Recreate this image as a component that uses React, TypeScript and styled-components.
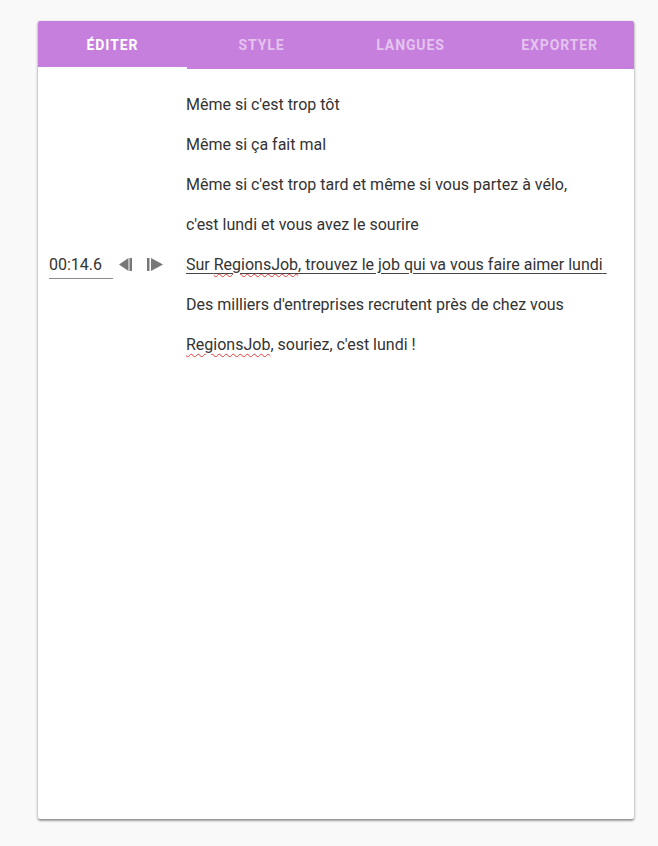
import React from 'react';
import styled, { createGlobalStyle } from 'styled-components';

const GlobalStyle = createGlobalStyle`
  html, body {
    margin: 0;
    padding: 0;
    background: #f9f9f9;
    font-family: Roboto, "Liberation Sans", sans-serif;
  }
`;

const Page = styled.div`
  padding: 21px 24px 27px 38px;
`;

const Card = styled.div`
  background: white;
  height: 798px;
  border-radius: 2px;
  box-shadow: 0 1px 3px rgba(0, 0, 0, 0.35), 0 2px 2px rgba(0, 0, 0, 0.22);
  display: flex;
  flex-direction: column;
  overflow: hidden;
`;

const TabBar = styled.div`
  display: grid;
  grid-template-columns: repeat(4, 1fr);
  height: 48px;
  background: #c77fdd;
`;

const Tab = styled.div<{ $active?: boolean }>`
  display: flex;
  align-items: center;
  justify-content: center;
  position: relative;
  font-size: 14px;
  font-weight: 700;
  letter-spacing: 0.9px;
  text-transform: uppercase;
  color: ${p => (p.$active ? '#ffffff' : 'rgba(255, 255, 255, 0.55)')};
  padding-bottom: 1px;

  &::after {
    content: '';
    position: absolute;
    left: 0;
    right: 0;
    bottom: 0;
    height: 2px;
    background: ${p => (p.$active ? '#ffffff' : 'transparent')};
  }
`;

const Lines = styled.div`
  padding-top: 15px;
  display: flex;
  flex-direction: column;
`;

const Row = styled.div`
  display: grid;
  grid-template-columns: 148px 1fr;
  height: 40px;
  align-items: center;
`;

const Controls = styled.div`
  display: flex;
  align-items: center;
  padding-left: 11px;
`;

const TimeInput = styled.div`
  width: 64px;
  box-sizing: border-box;
  font-size: 16px;
  color: #333;
  line-height: 20px;
  padding-bottom: 3px;
  border-bottom: 1px solid #8a8a8a;
  margin-top: 6px;
`;

const IconButton = styled.div<{ $gap: number }>`
  display: flex;
  align-items: center;
  margin-left: ${p => p.$gap}px;
  color: #777;
`;

const LineText = styled.div<{ $current?: boolean }>`
  font-size: 16px;
  color: #333;
  white-space: pre;
  text-decoration: ${p => (p.$current ? 'underline' : 'none')};
  text-decoration-color: #444;
  text-underline-offset: 3px;
`;

const Misspelled = styled.span`
  text-decoration: underline wavy #e53935;
  text-decoration-thickness: 1px;
  text-underline-offset: 3px;
`;

const PrevIcon = () => (
  <svg width="14" height="13" viewBox="0 0 14 13">
    <polygon points="9.5,0 9.5,13 0,6.5" fill="currentColor" />
    <rect x="10.5" y="0" width="2.5" height="13" fill="currentColor" />
  </svg>
);

const NextIcon = () => (
  <svg width="17" height="13" viewBox="0 0 17 13">
    <rect x="0" y="0" width="2.5" height="13" fill="currentColor" />
    <polygon points="4,0 4,13 16,6.5" fill="currentColor" />
  </svg>
);

const tabs = ['Éditer', 'Style', 'Langues', 'Exporter'];

export default function App() {
  return (
    <Page>
      <GlobalStyle />
      <Card>
        <TabBar>
          {tabs.map((t, i) => (
            <Tab key={t} $active={i === 0}>
              {t}
            </Tab>
          ))}
        </TabBar>
        <Lines>
          <Row>
            <div />
            <LineText>Même si c'est trop tôt</LineText>
          </Row>
          <Row>
            <div />
            <LineText>Même si ça fait mal</LineText>
          </Row>
          <Row>
            <div />
            <LineText>Même si c'est trop tard et même si vous partez à vélo,</LineText>
          </Row>
          <Row>
            <div />
            <LineText>c'est lundi et vous avez le sourire</LineText>
          </Row>
          <Row>
            <Controls>
              <TimeInput>00:14.6</TimeInput>
              <IconButton $gap={6}>
                <PrevIcon />
              </IconButton>
              <IconButton $gap={14}>
                <NextIcon />
              </IconButton>
            </Controls>
            <LineText $current>
              Sur <Misspelled>RegionsJob</Misspelled>, trouvez le job qui va vous faire aimer lundi{' '}
            </LineText>
          </Row>
          <Row>
            <div />
            <LineText>Des milliers d'entreprises recrutent près de chez vous</LineText>
          </Row>
          <Row>
            <div />
            <LineText>
              <Misspelled>RegionsJob</Misspelled>, souriez, c'est lundi !
            </LineText>
          </Row>
        </Lines>
      </Card>
    </Page>
  );
}
